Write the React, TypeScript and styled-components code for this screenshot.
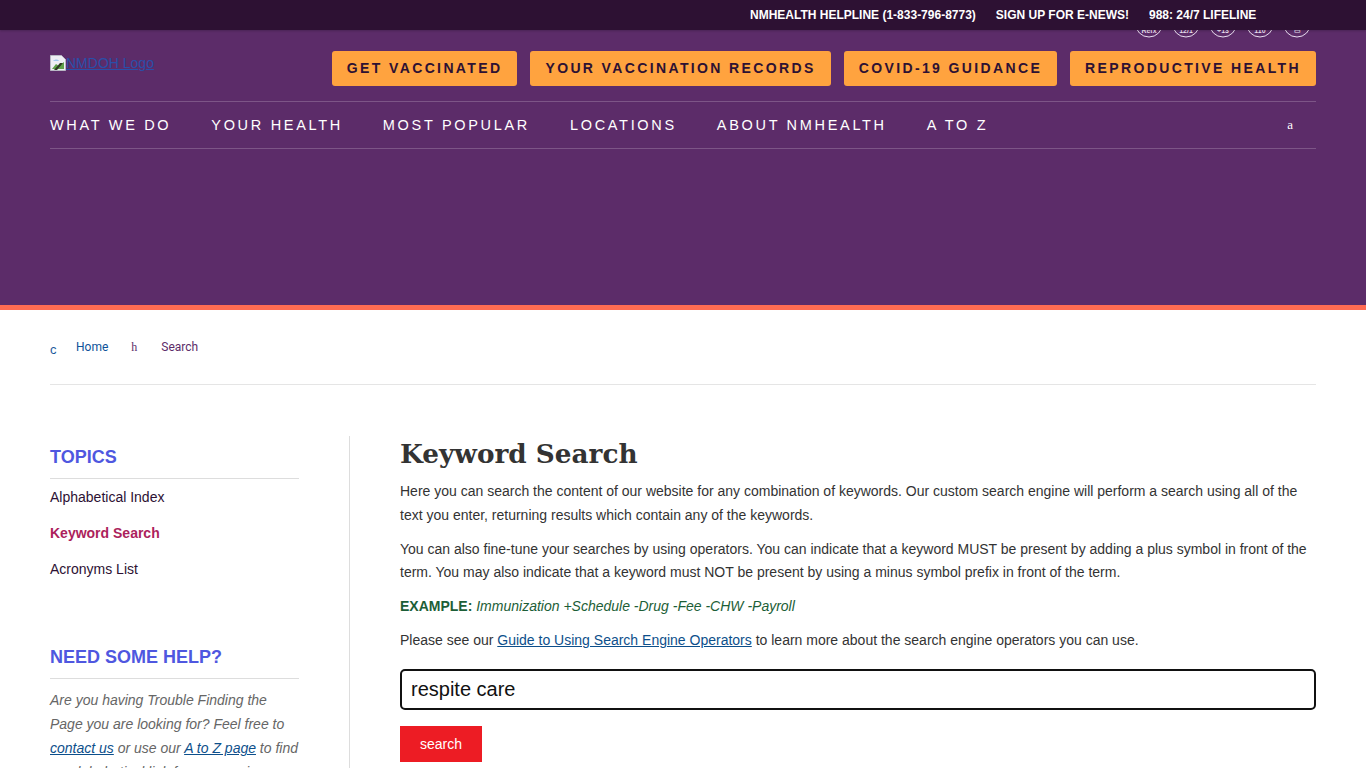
import React from "react";
import styled, { createGlobalStyle } from "styled-components";

const Global = createGlobalStyle`
  html, body { margin: 0; padding: 0; background: #fff; overflow: hidden; height: 768px; }
  body { font-family: "Liberation Sans", Arial, sans-serif; color: #333; }
  * { box-sizing: border-box; }
`;

const TopBar = styled.div`
  position: relative; z-index: 2; height: 30px; background: #2d1133;
  display: flex; align-items: center; padding-left: 750px; gap: 20px;
  box-shadow: 0 1px 2px rgba(0,0,0,.2);
`;
const TopLink = styled.a`
  color: #fff; font-size: 12px; font-weight: 700; line-height: 30px; white-space: nowrap;
`;
const Header = styled.header`
  display: flow-root; height: 275px; background: #5c2c69; padding: 0 50px;
`;
const Accent = styled.div` height: 5px; background: #ff6b52; `;
const SocialRow = styled.div`
  display: flex; justify-content: flex-end; gap: 9px; height: 30px; margin-top: -21px; padding-right: 5px;
  position: relative; z-index: 1;
`;
const SocialIcon = styled.span`
  width: 28px; height: 30px; display: block;
  svg { display: block; }
`;
const ButtonRow = styled.div`
  display: flex; justify-content: space-between; align-items: flex-start; height: 50px; margin-top: 12px;
`;
const LogoLink = styled.a`
  display: flex; align-items: flex-start; margin-top: 4px; color: #2a4fa8; font-size: 14px;
  text-decoration: underline; line-height: 16px;
`;
const CtaGroup = styled.div` display: flex; gap: 13px; `;
const Cta = styled.a`
  height: 35px; padding: 0 15px 2px; display: flex; align-items: center; background: #ffa33f; border-radius: 3px;
  color: #2d1133; font-size: 14px; font-weight: 700; letter-spacing: 2.37px; white-space: nowrap;
`;
const Nav = styled.nav`
  display: flex; align-items: center; height: 48px; border-top: 1px solid #7d5587; border-bottom: 1px solid #7d5587;
  gap: 40px;
`;
const NavLink = styled.a`
  color: #fff; font-size: 14.5px; letter-spacing: 2.68px; white-space: nowrap;
`;
const NavGlyph = styled.span`
  margin-left: auto; margin-right: 23px; color: #fff; font-family: "Liberation Serif", serif; font-size: 13px;
`;
const Wrap = styled.div` padding: 0 50px; `;
const Crumbs = styled.div`
  height: 75px; border-bottom: 1px solid #e5e5e5; display: flex; align-items: flex-start; padding-top: 30px;
  font-family: Roboto, sans-serif; font-size: 12px; line-height: 14px;
`;
const CrumbGlyph = styled.span<{ $w: number; $blue?: boolean }>`
  width: ${p => p.$w}px;
  font-family: ${p => (p.$blue ? '"Liberation Sans", sans-serif' : '"Liberation Serif", serif')};
  font-size: ${p => (p.$blue ? 13 : 12)}px;
  color: ${p => (p.$blue ? "#1e5a9c" : "#5c2c69")};
  padding-top: ${p => (p.$blue ? 3 : 0)}px;
`;
const CrumbLink = styled.a<{ $current?: boolean }>`
  color: ${p => (p.$current ? "#5c2c69" : "#0d5299")};
  margin-right: ${p => (p.$current ? 0 : 23)}px;
`;
const Columns = styled.div` display: flex; margin-top: 51px; `;
const Side = styled.aside` width: 300px; flex: none; border-right: 1px solid #ddd; padding-right: 50px; height: 400px; `;
const SideTitle = styled.h3`
  margin: 10px 0 0; font-size: 18px; line-height: 22px; height: 33px; font-weight: 700; color: #4f57e0;
  border-bottom: 1px solid #ddd; width: 249px;
`;
const HelpTitle = styled(SideTitle)` margin-top: 59px; `;
const SideList = styled.ul` list-style: none; margin: 0; padding: 0; `;
const SideItem = styled.li<{ $active?: boolean }>`
  font-size: 14px; line-height: 36px; color: ${p => (p.$active ? "#ac1f5c" : "#2d1133")};
  font-weight: ${p => (p.$active ? 700 : 400)};
`;
const HelpText = styled.p`
  margin: 9px 0 0; font-size: 14px; line-height: 24px; font-style: italic; color: #666; width: 249px;
`;
const SideAnchor = styled.a` color: #0d4f8b; text-decoration: underline; `;
const Main = styled.main` flex: 1; padding-left: 50px; `;
const Title = styled.h1`
  margin: 0; font-family: "DejaVu Serif", serif; font-weight: 700; font-size: 26.3px; line-height: 36px; color: #333;
`;
const Para = styled.p`
  margin: 0 0 10px; font-size: 14px; line-height: 23.8px; color: #333;
`;
const FirstPara = styled(Para)` margin-top: 8px; `;
const Example = styled(Para)` color: #1c5e37; font-style: italic; `;
const ExampleLabel = styled.strong` font-style: normal; `;
const GuideLink = styled.a` color: #0d4f8b; text-decoration: underline; `;
const SearchInput = styled.input`
  display: block; width: 100%; height: 41px; margin-top: 16px; border: 2px solid #111; border-radius: 5px; padding: 0 9px;
  font-family: "Liberation Sans", sans-serif; font-size: 20px; color: #111; background: #fff; outline: none;
`;
const SearchButton = styled.button`
  display: block; margin-top: 16px; width: 82px; height: 36px; border: 0; background: #ed1c24; color: #fff;
  font-family: "Liberation Sans", sans-serif; font-size: 14px; padding: 0;
`;

const icons = ["Refx", "12/1", "+13", "110", "▭"];

const Social = ({ label }: { label: string }) => (
  <SocialIcon>
    <svg width="28" height="30" viewBox="0 0 28 30" fill="none">
      <circle cx="14" cy="14.5" r="13.5" stroke="#e9dff0" strokeWidth="1" />
      <text x="14" y="24" textAnchor="middle" fill="#e9dff0" fontSize="7" fontWeight="700" fontFamily="Liberation Sans">{label}</text>
    </svg>
  </SocialIcon>
);

const BrokenImage = () => (
  <svg width="16" height="16" viewBox="0 0 16 16" style={{ flex: "none" }}>
    <path d="M0.5 0.5h11l4 4v11h-15z" fill="#eeeef4" stroke="#b8b8c4" />
    <path d="M2 14l4-5 3 2 5-4v7H2z" fill="#5fa14a" />
    <path d="M3 6c2-2 5-2 6 0z" fill="#9fc7ef" />
    <path d="M10 8l-6 7h3l6-7z" fill="#2e3a22" />
  </svg>
);

export default function App() {
  return (
    <>
      <Global />
      <TopBar>
        <TopLink>NMHEALTH HELPLINE (1-833-796-8773)</TopLink>
        <TopLink>SIGN UP FOR E-NEWS!</TopLink>
        <TopLink>988: 24/7 LIFELINE</TopLink>
      </TopBar>
      <Header>
        <SocialRow>
          {icons.map(i => <Social key={i} label={i} />)}
        </SocialRow>
        <ButtonRow>
          <LogoLink><BrokenImage />NMDOH Logo</LogoLink>
          <CtaGroup>
            <Cta>GET VACCINATED</Cta>
            <Cta>YOUR VACCINATION RECORDS</Cta>
            <Cta>COVID-19 GUIDANCE</Cta>
            <Cta>REPRODUCTIVE HEALTH</Cta>
          </CtaGroup>
        </ButtonRow>
        <Nav>
          <NavLink>WHAT WE DO</NavLink>
          <NavLink>YOUR HEALTH</NavLink>
          <NavLink>MOST POPULAR</NavLink>
          <NavLink>LOCATIONS</NavLink>
          <NavLink>ABOUT NMHEALTH</NavLink>
          <NavLink>A TO Z</NavLink>
          <NavGlyph>a</NavGlyph>
        </Nav>
      </Header>
      <Accent />
      <Wrap>
        <Crumbs>
          <CrumbGlyph $w={26} $blue>c</CrumbGlyph>
          <CrumbLink>Home</CrumbLink>
          <CrumbGlyph $w={30}>h</CrumbGlyph>
          <CrumbLink $current>Search</CrumbLink>
        </Crumbs>
        <Columns>
          <Side>
            <SideTitle>TOPICS</SideTitle>
            <SideList>
              <SideItem>Alphabetical Index</SideItem>
              <SideItem $active>Keyword Search</SideItem>
              <SideItem>Acronyms List</SideItem>
            </SideList>
            <HelpTitle>NEED SOME HELP?</HelpTitle>
            <HelpText>
              Are you having Trouble Finding the Page you are looking for? Feel free to{" "}
              <SideAnchor>contact us</SideAnchor> or use our <SideAnchor>A to Z page</SideAnchor> to find
              an alphabetical link for any service.
            </HelpText>
          </Side>
          <Main>
            <Title>Keyword Search</Title>
            <FirstPara>
              Here you can search the content of our website for any combination of keywords. Our custom search engine will perform a search using all of the text you enter, returning results which contain any of the keywords.
            </FirstPara>
            <Para>
              You can also fine-tune your searches by using operators. You can indicate that a keyword MUST be present by adding a plus symbol in front of the term. You may also indicate that a keyword must NOT be present by using a minus symbol prefix in front of the term.
            </Para>
            <Example><ExampleLabel>EXAMPLE:</ExampleLabel> Immunization +Schedule -Drug -Fee -CHW -Payroll</Example>
            <Para>
              Please see our <GuideLink>Guide to Using Search Engine Operators</GuideLink> to learn more about the search engine operators you can use.
            </Para>
            <SearchInput defaultValue="respite care" />
            <SearchButton>search</SearchButton>
          </Main>
        </Columns>
      </Wrap>
    </>
  );
}
